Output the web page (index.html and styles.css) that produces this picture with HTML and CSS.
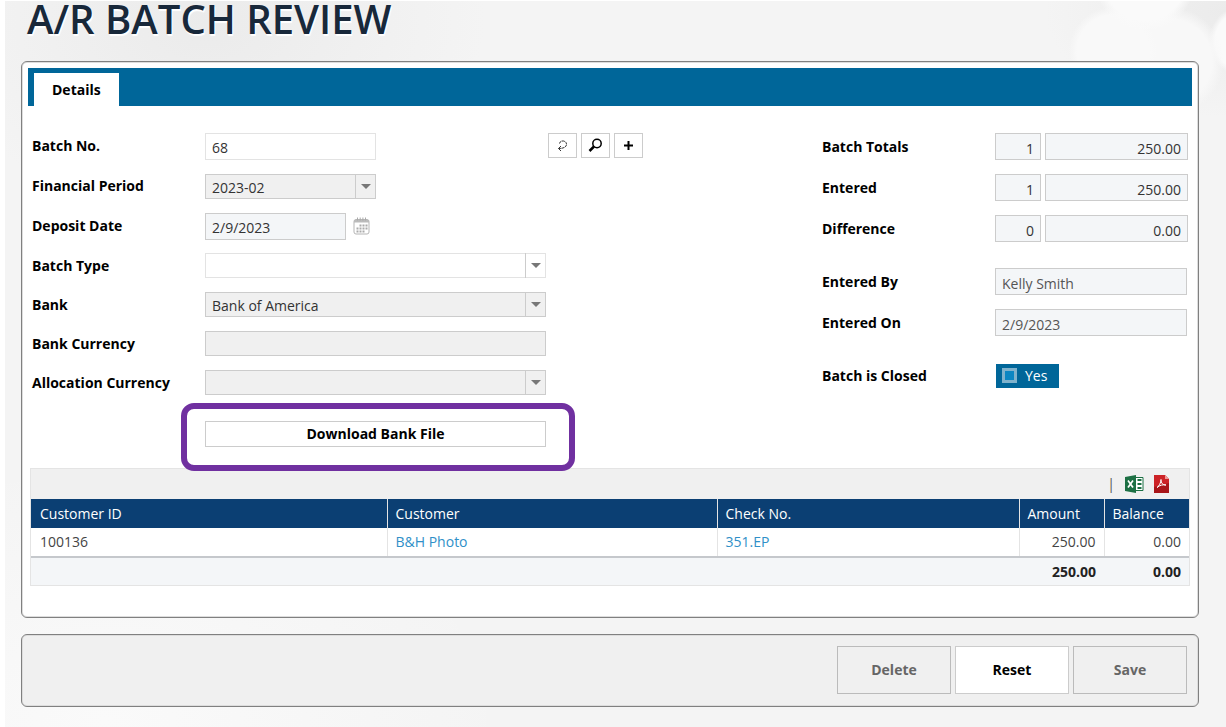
FILE: index.html
```html
<!DOCTYPE html>
<html lang="en">
<head>
<meta charset="utf-8">
<title>A/R Batch Review</title>
<link rel="stylesheet" href="styles.css">
</head>
<body>
<main class="page">
  <h1 class="title">A/R BATCH REVIEW</h1>

  <section class="panel main">
    <nav class="tabs"><button class="tab" type="button">Details</button></nav>

    <form class="form" id="batch-form">
      <div class="fields">
        <label for="batch-no">Batch No.</label>
        <div class="cell"><input class="box medium light" id="batch-no" value="68"></div>
        <label for="period">Financial Period</label>
        <div class="cell"><span class="drop medium"><select class="box grey" id="period"><option>2023-02</option></select></span></div>
        <label for="deposit">Deposit Date</label>
        <div class="cell date">
          <input class="box dated" id="deposit" value="2/9/2023">
          <button class="calendar" type="button" aria-label="Choose date">
            <svg width="17" height="18" viewBox="0 0 17 18"><rect x="1" y="2.500" width="15" height="14.500" rx="2" fill="#fff" stroke="#b5b5b5"/><path d="M1 3h15v2.500H1z" fill="#bbb"/><path d="M4.500 .5v3M7.200 .5v3M9.900 .5v3M12.500 .5v3" stroke="#aaa"/><path d="M6.500 8.500h8M3.500 11.500h11M3.500 14.500h8" stroke="#aaa" stroke-width="2" stroke-dasharray="2 1"/></svg>
          </button>
        </div>
        <label for="type">Batch Type</label>
        <div class="cell"><span class="drop"><select class="box light" id="type"><option></option></select></span></div>
        <label for="bank">Bank</label>
        <div class="cell"><span class="drop"><select class="box grey" id="bank"><option>Bank of America</option></select></span></div>
        <label for="currency">Bank Currency</label>
        <div class="cell"><input class="box grey short" id="currency" readonly></div>
        <label for="allocation">Allocation Currency</label>
        <div class="cell"><span class="drop"><select class="box grey" id="allocation"><option></option></select></span></div>
        <div class="download"><button class="bank-file" type="button">Download Bank File</button></div>
      </div>

      <div class="tools">
        <button class="tool" type="button" aria-label="Reload">
          <svg width="13" height="13" viewBox="0 0 13 13" fill="none" stroke="#333"><path d="M3.500 4.500C4 1 10 1 10.500 5c.2 3-3 4.500-8 4.500" stroke-dasharray="3 .5"/><path d="M5 7 2.500 9.500 5 12"/></svg>
        </button>
        <button class="tool" type="button" aria-label="Search">
          <svg width="15" height="15" viewBox="0 0 15 15" fill="none" stroke="#000"><circle cx="9" cy="5.500" r="4.200" stroke-width="1.500"/><path d="M6 8.500 1.500 13" stroke-width="2.500"/></svg>
        </button>
        <button class="tool" type="button" aria-label="Add">
          <svg width="11" height="11" viewBox="0 0 11 11" stroke="#000" stroke-width="2"><path d="M5.500 1v9M1 5.500h9"/></svg>
        </button>
      </div>

      <div class="summary">
        <div class="group">
          <label for="total">Batch Totals</label>
          <div class="pair"><input class="box number" aria-label="Batch count" value="1" readonly><input class="box number" id="total" value="250.00" readonly></div>
          <label for="entered">Entered</label>
          <div class="pair"><input class="box number" aria-label="Entered count" value="1" readonly><input class="box number" id="entered" value="250.00" readonly></div>
          <label for="difference">Difference</label>
          <div class="pair"><input class="box number" aria-label="Difference count" value="0" readonly><input class="box number" id="difference" value="0.00" readonly></div>
        </div>
        <div class="group">
          <label for="by">Entered By</label>
          <input class="box soft" id="by" value="Kelly Smith" readonly>
          <label for="on">Entered On</label>
          <input class="box soft" id="on" value="2/9/2023" readonly>
        </div>
        <div class="group">
          <span class="caption" id="closed-caption">Batch is Closed</span>
          <label class="toggle" for="closed"><input type="checkbox" id="closed" checked aria-describedby="closed-caption">Yes</label>
        </div>
      </div>
    </form>

    <div class="grid">
      <div class="exports">
        <span class="bar">|</span>
        <button type="button" aria-label="Export to Excel">
          <svg width="19" height="18" viewBox="0 0 19 18"><path d="M10.500 2.500h7.500v13h-7.500z" fill="#fff" stroke="#1d7044"/><path d="M0 2 11 0v18L0 16z" fill="#1d7044"/><path d="m3 5.500 5 7M8 5.500l-5 7" stroke="#fff" stroke-width="1.700"/><path d="M12.500 5h4M12.500 9h4M12.500 13h4" stroke="#1d7044" stroke-width="2"/></svg>
        </button>
        <button type="button" aria-label="Export to PDF">
          <svg width="15" height="18" viewBox="0 0 15 18"><path d="M0 0h11l4 4v14H0z" fill="#cc2226"/><path d="M0 12 15 8v10H0z" fill="#a81519"/><path d="M11 0v4h4z" fill="#ed9a98"/><path d="M3 12.500c2-1 4-5 4-8 0 4 2 5.500 5 5.500-3-.5-6 0-9 2.500z" fill="none" stroke="#fff"/></svg>
        </button>
      </div>
      <table class="entries">
        <colgroup><col class="c-id"><col class="c-customer"><col class="c-check"><col class="c-amount"><col class="c-balance"></colgroup>
        <thead><tr><th>Customer ID</th><th>Customer</th><th>Check No.</th><th>Amount</th><th>Balance</th></tr></thead>
        <tbody><tr><td>100136</td><td><a href="#">B&amp;H Photo</a></td><td><a href="#">351.EP</a></td><td class="num">250.00</td><td class="num">0.00</td></tr></tbody>
        <tfoot><tr><td colspan="3"></td><td class="num">250.00</td><td class="num">0.00</td></tr></tfoot>
      </table>
    </div>
  </section>

  <footer class="panel actions">
    <button type="button" disabled>Delete</button>
    <button type="reset" form="batch-form">Reset</button>
    <button type="button" disabled>Save</button>
  </footer>
</main>
</body>
</html>
```
FILE: styles.css
```css
* { box-sizing: border-box; }
body {
  margin: 0;
  background: #fff;
  color: #000;
  font: 14px/20px "Open Sans", "Noto Sans", sans-serif;
}
button, input, select { font: inherit; color: inherit; }
button { display: flex; align-items: center; justify-content: center; padding: 0; border: 0; background: none; }
svg { display: block; }

.page {
  min-height: calc(100vh - 1px);
  margin: 1px 0 0 5px;
  padding: 0 27px 20px 16px;
  background:
    radial-gradient(circle at 1140px -20px, #fafafa 40px, transparent 50px),
    radial-gradient(circle at 1108px 50px, #f9f9f9 36px, transparent 44px),
    radial-gradient(circle at 1165px 60px, #f8f8f8 42px, transparent 54px),
    radial-gradient(circle at 1240px 40px, #fafafa 30px, transparent 36px),
    radial-gradient(ellipse at 200px 20px, #ebebeb, transparent 280px),
    radial-gradient(ellipse at 1220px 10px, #ebebeb, transparent 180px),
    radial-gradient(ellipse at 100px 720px, #fafafa, transparent 400px),
    #f4f4f4;
}
.title {
  margin: 0;
  padding: 0 6px;
  height: 60px;
  color: #18283a;
  font-size: 40px;
  font-weight: 600;
  line-height: 36px;
  text-shadow: 1px 2px 1px #fff;
}

.panel {
  border: 1px solid #808080;
  border-radius: 6px;
  background: #fff;
  box-shadow: inset 0 0 0 1px #ddd;
}
.main { padding: 6px 6px 31px; }
.tabs { display: flex; padding: 5px 6px 0; background: #006699; }
.tab { height: 33px; padding: 0 18px; background: #fff; }

.form {
  display: grid;
  grid-template-columns: 514fr 276fr 366fr;
  padding: 20px 4px 0;
}
label, .caption, .tab, .bank-file, .actions button { font-weight: 700; }
.fields {
  display: grid;
  grid-template-columns: 173px 1fr;
  grid-template-rows: 40px 40px 40px 39px 39px 39px 39px 66px;
  align-items: center;
}
.cell { display: flex; align-items: center; }
.box {
  width: 100%;
  min-width: 0;
  height: 27px;
  padding: 3px 6px 0;
  border: 1px solid #ccc;
  border-radius: 0;
  background: #f4f6f8;
  color: #333;
  outline: 0;
}
.light { border-color: #e3e3e3; background: #fff; }
.grey { background: #f0f0f0; }
.short, .drop .box { height: 25px; }
.medium { width: 171px; }
.dated { width: 141px; }
.date { gap: 7px; }
.drop { position: relative; display: block; flex: 1; }
.drop.medium { flex: none; }
.drop select { display: block; appearance: none; padding-left: 6px; opacity: 1; }
.drop::before {
  content: "";
  position: absolute;
  inset: 0 0 0 auto;
  width: 20px;
  border-left: 1px solid #ccc;
  pointer-events: none;
}
.drop::after {
  content: "";
  position: absolute;
  top: 10px;
  right: 5px;
  border: 5px solid transparent;
  border-top-color: #777;
  border-bottom: 0;
  pointer-events: none;
}
.download { position: relative; grid-column: 2; align-self: stretch; padding-top: 19px; }
.download::after {
  content: "";
  position: absolute;
  inset: 1px -29px -3px -24px;
  border: 6px solid #7030a0;
  border-radius: 13px;
  pointer-events: none;
}
.bank-file { width: 100%; height: 26px; border: 1px solid #ccc; background: #fff; }

.tools { display: flex; gap: 4px; padding: 7px 0 0 2px; align-items: flex-start; }
.tool { width: 29px; height: 25px; border: 1px solid #ccc; background: #fff; }

.summary { display: grid; gap: 12px; align-content: start; }
.group {
  display: grid;
  grid-template-columns: 173px 1fr;
  grid-auto-rows: 41px;
  align-items: center;
}
.pair { display: grid; grid-template-columns: 46px 1fr; gap: 4px; }
.number { text-align: right; }
.group > .soft { width: calc(100% - 1px); color: #555; }
.toggle {
  display: flex;
  align-items: center;
  gap: 8px;
  width: 63px;
  height: 24px;
  margin-left: 1px;
  padding: 0 6px;
  background: #006699;
  color: #fff;
  font-weight: 400;
}
.toggle input { appearance: none; width: 15px; height: 15px; margin: 0; border: 3px solid #7fb2cc; background: #0b86c2; }

.grid { margin: 0 2px; border: 1px solid #e4e4e4; }
.exports {
  display: flex;
  align-items: center;
  justify-content: flex-end;
  gap: 10px;
  height: 30px;
  padding-right: 20px;
  background: #f0f0f0;
}
.bar { color: #555; }
.entries { width: 100%; border-collapse: collapse; table-layout: fixed; }
.c-id { width: 356px; }
.c-check { width: 302px; }
.c-amount, .c-balance { width: 85px; }
th, td { height: 29px; padding: 0 8px; text-align: left; }
th { background: #0b3f73; color: #fff; font-weight: 400; }
th + th { border-left: 1px solid #e4e4e4; }
th:first-child, td:first-child { padding-left: 9px; }
tbody td { border-bottom: 2px solid #c5c8cc; color: #444; }
tbody td + td { border-left: 1px solid #e4e4e4; }
tfoot td { height: 28px; background: #f4f6f8; font-weight: 700; color: #222; }
.entries .num { text-align: right; }
a { color: #3090c8; text-decoration: none; }

.actions {
  display: flex;
  justify-content: flex-end;
  gap: 4px;
  margin-top: 16px;
  padding: 11px 11px 12px;
  background: #f0f0f0;
}
.actions button { width: 114px; height: 48px; border: 1px solid #ccc; background: #fff; }
.actions button:disabled { border-color: #bbb; background: #f0f0f0; color: #666; }
```
